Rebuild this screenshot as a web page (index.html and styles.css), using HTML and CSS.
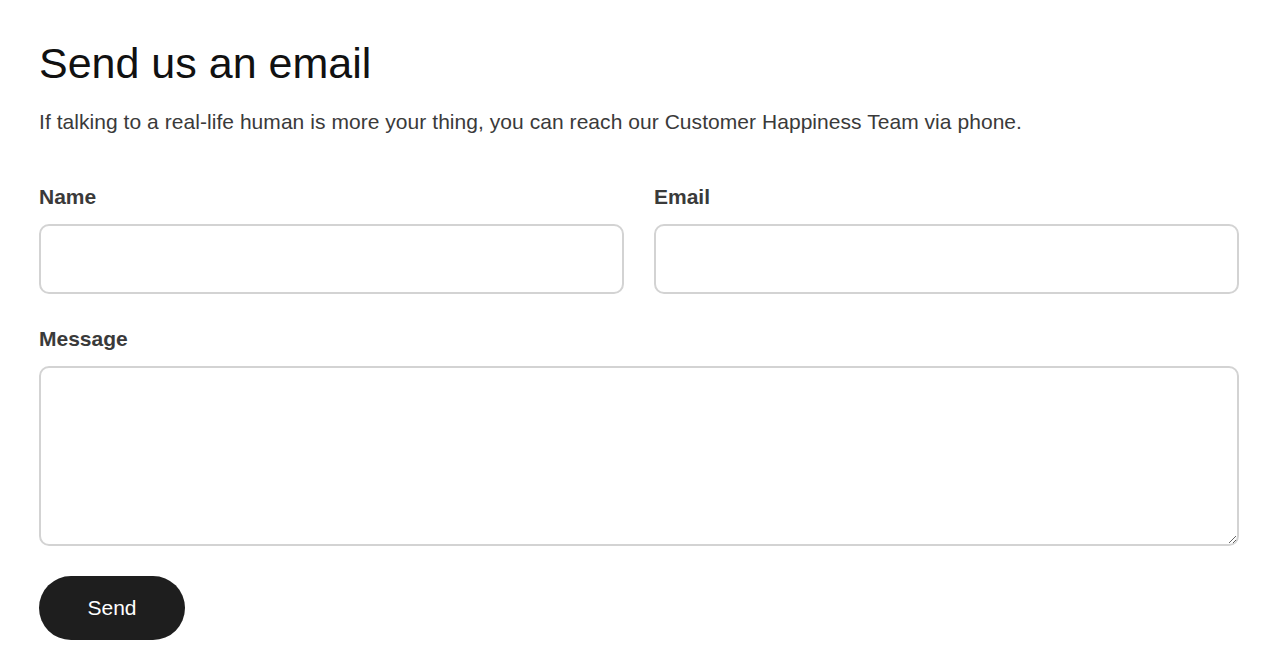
FILE: index.html
```html
<!DOCTYPE html>
<html lang="en">
<head>
  <meta charset="UTF-8" />
  <meta name="viewport" content="width=device-width, initial-scale=1.0" />
  <title>Send us an email</title>
  <link rel="stylesheet" href="styles.css">
</head>
<body>
  <div class="container">
    <h1>Send us an email</h1>
    <p class="intro">If talking to a real-life human is more your thing, you can reach our Customer Happiness Team via phone.</p>
    <form class="contact-form">
      <div class="row">
        <div class="field">
          <label for="name">Name</label>
          <input type="text" id="name" name="name" />
        </div>
        <div class="field">
          <label for="email">Email</label>
          <input type="email" id="email" name="email" />
        </div>
      </div>
      <div class="field field-message">
        <label for="message">Message</label>
        <textarea id="message" name="message"></textarea>
      </div>
      <button type="button">Send</button>
    </form>
  </div>
</body>
</html>
```

FILE: styles.css
```css
body {
  font-family: "Liberation Sans", Arial, sans-serif;
  background-color: #fff;
  color: #333;
  margin: 0;
}
.container {
  width: 1200px;
  padding: 39px;
}
h1 {
  margin: 0;
  font-size: 43px;
  line-height: 48px;
  font-weight: normal;
  color: #111;
}
.intro {
  margin: 20px 0 0;
  font-size: 21px;
  line-height: 30px;
  letter-spacing: 0.05px;
  color: #3a3a3a;
}
.contact-form {
  margin-top: 48px;
}
.row {
  display: flex;
  gap: 30px;
}
.field {
  flex: 1;
  display: flex;
  flex-direction: column;
  margin-bottom: 33px;
}
.field-message {
  margin-bottom: 30px;
}
.field label {
  font-size: 21px;
  line-height: 24px;
  font-weight: bold;
  color: #3a3a3a;
  margin-bottom: 15px;
}
.field input,
.field textarea {
  box-sizing: border-box;
  width: 100%;
  border: 2px solid #d3d3d3;
  border-radius: 10px;
  font-family: inherit;
  font-size: 18px;
  padding: 10px 16px;
  background: #fff;
}
.field input {
  height: 70px;
}
.field textarea {
  height: 180px;
  display: block;
}
button {
  display: block;
  width: 146px;
  height: 64px;
  background-color: #1e1e1e;
  color: #fff;
  border: none;
  border-radius: 32px;
  font-family: inherit;
  font-size: 21px;
}
```
